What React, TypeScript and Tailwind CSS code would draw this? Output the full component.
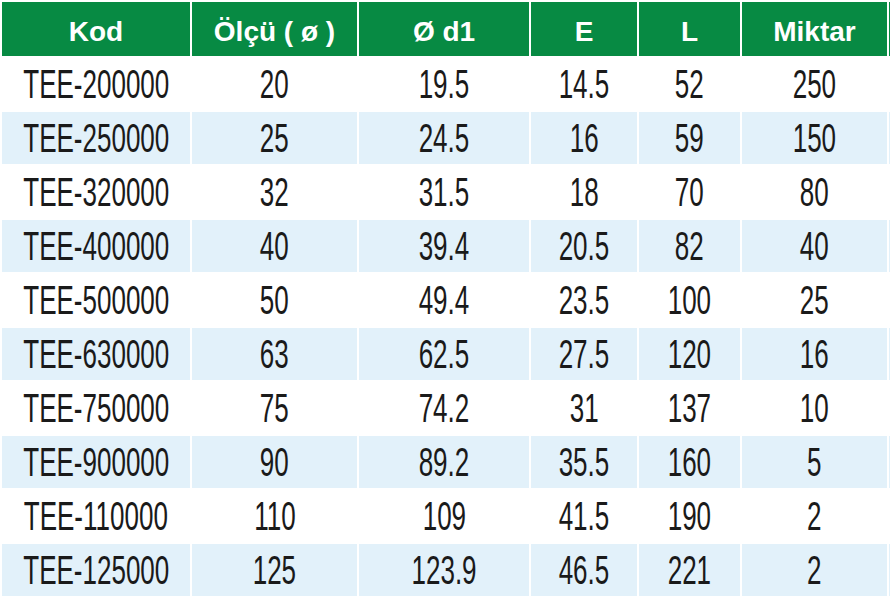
import React from "react";

const headers = ["Kod", "Ölçü ( ø )", "Ø d1", "E", "L", "Miktar"];

const rows = [
	["TEE-200000", "20", "19.5", "14.5", "52", "250"],
	["TEE-250000", "25", "24.5", "16", "59", "150"],
	["TEE-320000", "32", "31.5", "18", "70", "80"],
	["TEE-400000", "40", "39.4", "20.5", "82", "40"],
	["TEE-500000", "50", "49.4", "23.5", "100", "25"],
	["TEE-630000", "63", "62.5", "27.5", "120", "16"],
	["TEE-750000", "75", "74.2", "31", "137", "10"],
	["TEE-900000", "90", "89.2", "35.5", "160", "5"],
	["TEE-110000", "110", "109", "41.5", "190", "2"],
	["TEE-125000", "125", "123.9", "46.5", "221", "2"],
];

const App: React.FC = () => {
	return (
		<div className="w-[890px] h-[599px] overflow-hidden bg-white">
			<div className="pl-[2px] pt-[2px] w-[960px] grid grid-cols-[188px_165px_170px_106px_101px_145px_60px] grid-rows-[54px_repeat(10,52px)] gap-[2px] font-['Liberation_Sans',Arial,sans-serif]">
				{/* Header */}
				{headers.map((h, i) => (
					<div
						key={i}
						className="bg-[#078a43] text-white font-bold text-[28px] flex items-center justify-center pt-[6px] whitespace-nowrap"
					>
						{h}
					</div>
				))}
				<div className="bg-[#078a43]" />

				{/* Rows */}
				{rows.map((row, r) => (
					<React.Fragment key={r}>
						{row.map((cell, c) => (
							<div
								key={c}
								className={`flex items-center justify-center text-[40px] text-[#1a1a1a] whitespace-nowrap ${
									r % 2 === 1 ? "bg-[#e2f1fa]" : "bg-white"
								}`}
							>
								<span className="inline-block scale-x-[0.65] leading-none whitespace-nowrap">
									{cell}
								</span>
							</div>
						))}
						<div className={r % 2 === 1 ? "bg-[#e2f1fa]" : "bg-white"} />
					</React.Fragment>
				))}
			</div>
		</div>
	);
};

export default App;
